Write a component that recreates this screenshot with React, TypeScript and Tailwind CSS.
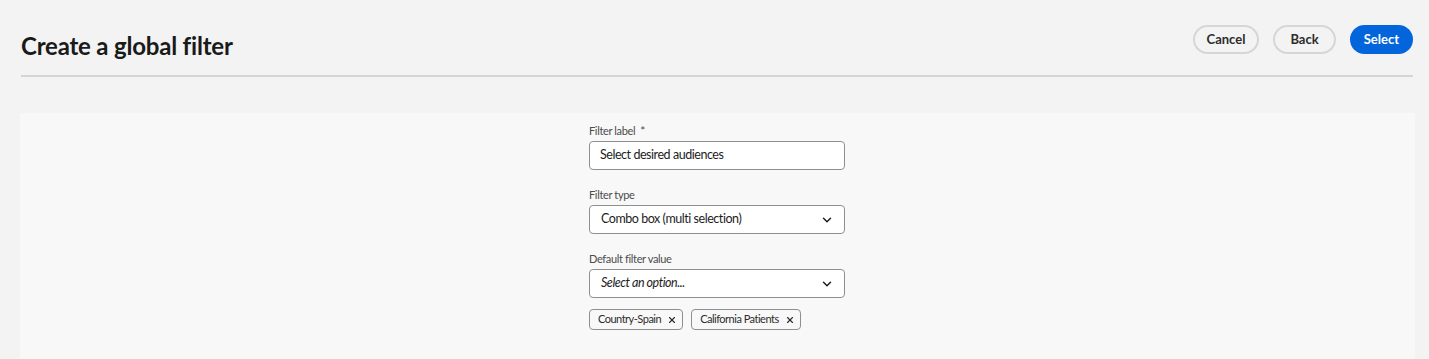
import { ChevronDown, X } from "lucide-react"

const font = { fontFamily: "Lato, 'Noto Sans', sans-serif" }

function Field({ label, required, children }: { label: string; required?: boolean; children: React.ReactNode }) {
  return (
    <div className="flex flex-col">
      <label className="text-[11px] leading-[16px] tracking-[-0.35px] text-[#4b4b4b] mb-[2px] flex items-center gap-[5px]">
        {label}
        {required && <span className="text-[12px] leading-none">*</span>}
      </label>
      {children}
    </div>
  )
}

function Tag({ text }: { text: string }) {
  return (
    <div className="h-[21px] flex items-center gap-[6px] pl-[8px] pr-[5px] border border-[#8f8f8f] rounded-[4px] bg-[#f8f8f8] text-[11px] tracking-[-0.5px] text-[#2c2c2c]">
      <span>{text}</span>
      <X className="w-[10px] h-[10px]" strokeWidth={2.75} />
    </div>
  )
}

export default function App() {
  return (
    <div className="min-h-[359px] bg-[#f3f3f3] text-[#1d1d1d] pl-[20px] pr-[14px]" style={font}>
      <header className="flex items-center justify-between pt-[25px] pb-[14px] border-b-2 border-[#d5d5d5] ml-[1px] mr-[2px]">
        <h1 className="text-[24px] leading-[30px] font-bold tracking-[-0.2px] text-[#1a1a1a] mt-[6px]">
          Create a global filter
        </h1>
        <div className="flex items-center gap-[14px] self-start">
          <button className="h-[29px] px-[12px] rounded-full border-2 border-[#d6d6d6] text-[13px] font-bold text-[#2c2c2c]">
            Cancel
          </button>
          <button className="h-[29px] px-[15px] rounded-full border-2 border-[#d6d6d6] text-[13px] font-bold text-[#2c2c2c]">
            Back
          </button>
          <button className="h-[29px] px-[14px] rounded-full bg-[#0265dc] text-[13px] font-bold text-white">
            Select
          </button>
        </div>
      </header>

      <main className="mt-[36px] bg-[#f8f8f8] pt-[10px] pb-[40px] flex justify-center">
        <div className="w-[256px] flex flex-col gap-[17px] -ml-[1px]">
          <Field label="Filter label" required>
            <div className="h-[29px] border border-[#8f8f8f] rounded-[4px] bg-white flex items-center px-[10px] text-[12.5px] tracking-[-0.45px]">
              Select desired audiences
            </div>
          </Field>
          <Field label="Filter type">
            <div className="h-[29px] border border-[#8f8f8f] rounded-[4px] bg-white flex items-center justify-between pl-[11px] pr-[10px] text-[12.5px] tracking-[-0.45px]">
              <span>Combo box (multi selection)</span>
              <ChevronDown className="w-[14px] h-[14px]" strokeWidth={2.5} />
            </div>
          </Field>
          <div className="flex flex-col">
            <Field label="Default filter value">
              <div className="h-[29px] border border-[#8f8f8f] rounded-[4px] bg-white flex items-center justify-between pl-[11px] pr-[10px] text-[12.5px] tracking-[-0.45px]">
                <span className="italic">Select an option...</span>
                <ChevronDown className="w-[14px] h-[14px]" strokeWidth={2.5} />
              </div>
            </Field>
            <div className="flex gap-[8px] mt-[11px]">
              <Tag text="Country-Spain" />
              <Tag text="California Patients" />
            </div>
          </div>
        </div>
      </main>
    </div>
  )
}
